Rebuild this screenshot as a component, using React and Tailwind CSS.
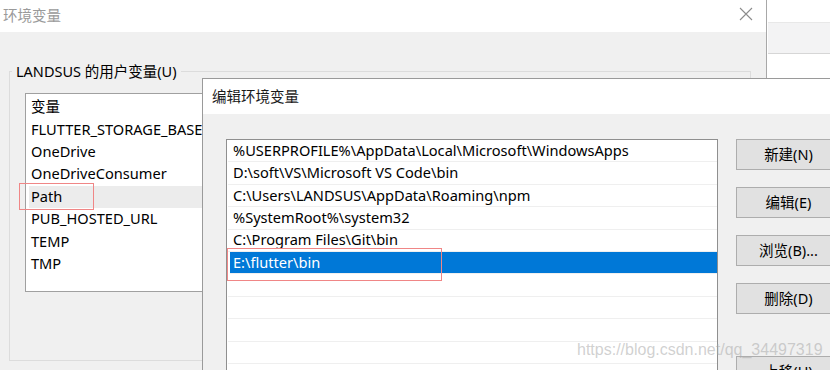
import React from "react";

const backItems = ["FLUTTER_STORAGE_BASE", "OneDrive", "OneDriveConsumer", "Path", "PUB_HOSTED_URL", "TEMP", "TMP"];
const paths = [
  "%USERPROFILE%\\AppData\\Local\\Microsoft\\WindowsApps",
  "D:\\soft\\VS\\Microsoft VS Code\\bin",
  "C:\\Users\\LANDSUS\\AppData\\Roaming\\npm",
  "%SystemRoot%\\system32",
  "C:\\Program Files\\Git\\bin",
  "E:\\flutter\\bin",
  "",
  "",
  "",
  "",
];
const buttons = ["新建(N)", "编辑(E)", "浏览(B)...", "删除(D)"];

export default function App() {
  return (
    <div className="relative w-[830px] h-[370px] overflow-hidden bg-white font-['Noto_Sans','Noto_Sans_CJK_SC',sans-serif] text-[14.6px] text-black">
      {/* back window */}
      <div className="absolute left-0 top-0 w-[767px] h-[370px] flex flex-col border-r border-[#a8a8a8]">
        <div className="h-[32px] shrink-0 bg-white flex items-center justify-between pl-[3px] pr-[13px]">
          <span className="text-[#9a9a9a] text-[14.5px] leading-none -mt-[2px]">环境变量</span>
          <svg width="14" height="14" viewBox="0 0 14 14" className="-mt-[4px]">
            <path d="M1 1 L13 13 M13 1 L1 13" stroke="#8c8c8c" strokeWidth="1.1" fill="none" />
          </svg>
        </div>
        <div className="flex-1 bg-[#f0f0f0] pl-[9px] pt-[39px]">
          <div className="relative w-[742px] h-[290px] border border-[#dcdcdc] pl-[15px] pt-[21px]">
            <span className="absolute left-[2px] -top-[11px] bg-[#f0f0f0] px-[4px] leading-[20px] text-[14.5px]">LANDSUS 的用户变量(U)</span>
            <div className="w-[500px] h-[199px] bg-white border border-[#a0a0a0] pt-[2px] pl-[3px]">
              <div className="h-[22.4px] flex items-center pl-[2px] text-[14.5px]">变量</div>
              {backItems.map((t) => (
                <div
                  key={t}
                  className={`h-[22.4px] flex items-center pl-[2px] ${t === "Path" ? "bg-[#ececec]" : ""}`}
                >
                  {t}
                </div>
              ))}
            </div>
          </div>
        </div>
      </div>

      {/* window behind, right strip */}
      <div className="absolute left-[768px] top-0 right-0 h-[78px] bg-white pt-[22px]">
        <div className="h-[32px] bg-[#f3f3f4] border-t border-[#e8e8e8] border-b border-b-[#d6d6d6]"></div>
      </div>

      {/* front dialog */}
      <div className="absolute left-[202px] top-[78px] w-[650px] h-[300px] flex flex-col border-l border-t border-[#9a9a9a]">
        <div className="h-[35px] shrink-0 bg-white flex items-center pl-[9px]">
          <span className="text-[14.5px] leading-none text-[#1a1a1a]">编辑环境变量</span>
        </div>
        <div className="flex-1 bg-[#f0f0f0] flex pl-[23px] pt-[25px]">
          <div className="w-[492px] h-[300px] bg-white border border-[#8f8f8f] pl-[1px]">
            {paths.map((p, i) => (
              <div
                key={i}
                className={`h-[22.4px] border-b border-[#efefef] flex items-center ${
                  p === "E:\\flutter\\bin" ? "bg-[#0078d7] text-white ml-[2px] pl-[3px]" : "pl-[5px]"
                }`}
              >
                {p}
              </div>
            ))}
          </div>
          <div className="ml-[18px] flex flex-col">
            <div className="flex flex-col gap-[17px]">
              {buttons.map((b) => (
                <div
                  key={b}
                  className="w-[105px] h-[31px] shrink-0 bg-[#e1e1e1] border border-[#adadad] flex items-center justify-center text-[14.5px]"
                >
                  {b}
                </div>
              ))}
            </div>
            <div className="mt-[42px] w-[105px] h-[31px] shrink-0 bg-[#e1e1e1] border border-[#adadad] flex items-center justify-center text-[14.5px]">
              上移(U)
            </div>
          </div>
        </div>
      </div>

      {/* annotations */}
      <div className="absolute left-[19px] top-[183px] w-[75px] h-[27px] border-[1.5px] border-[#f08686]"></div>
      <div className="absolute left-[227px] top-[248px] w-[215px] h-[33px] border-[1.5px] border-[#f08686]"></div>

      {/* watermark */}
      <div className="absolute left-[577px] top-[340px] font-['Liberation_Sans',sans-serif] text-[16px] leading-[20px] text-[rgba(170,170,170,0.55)]">
        https://blog.csdn.net/qq_34497319
      </div>
    </div>
  );
}
